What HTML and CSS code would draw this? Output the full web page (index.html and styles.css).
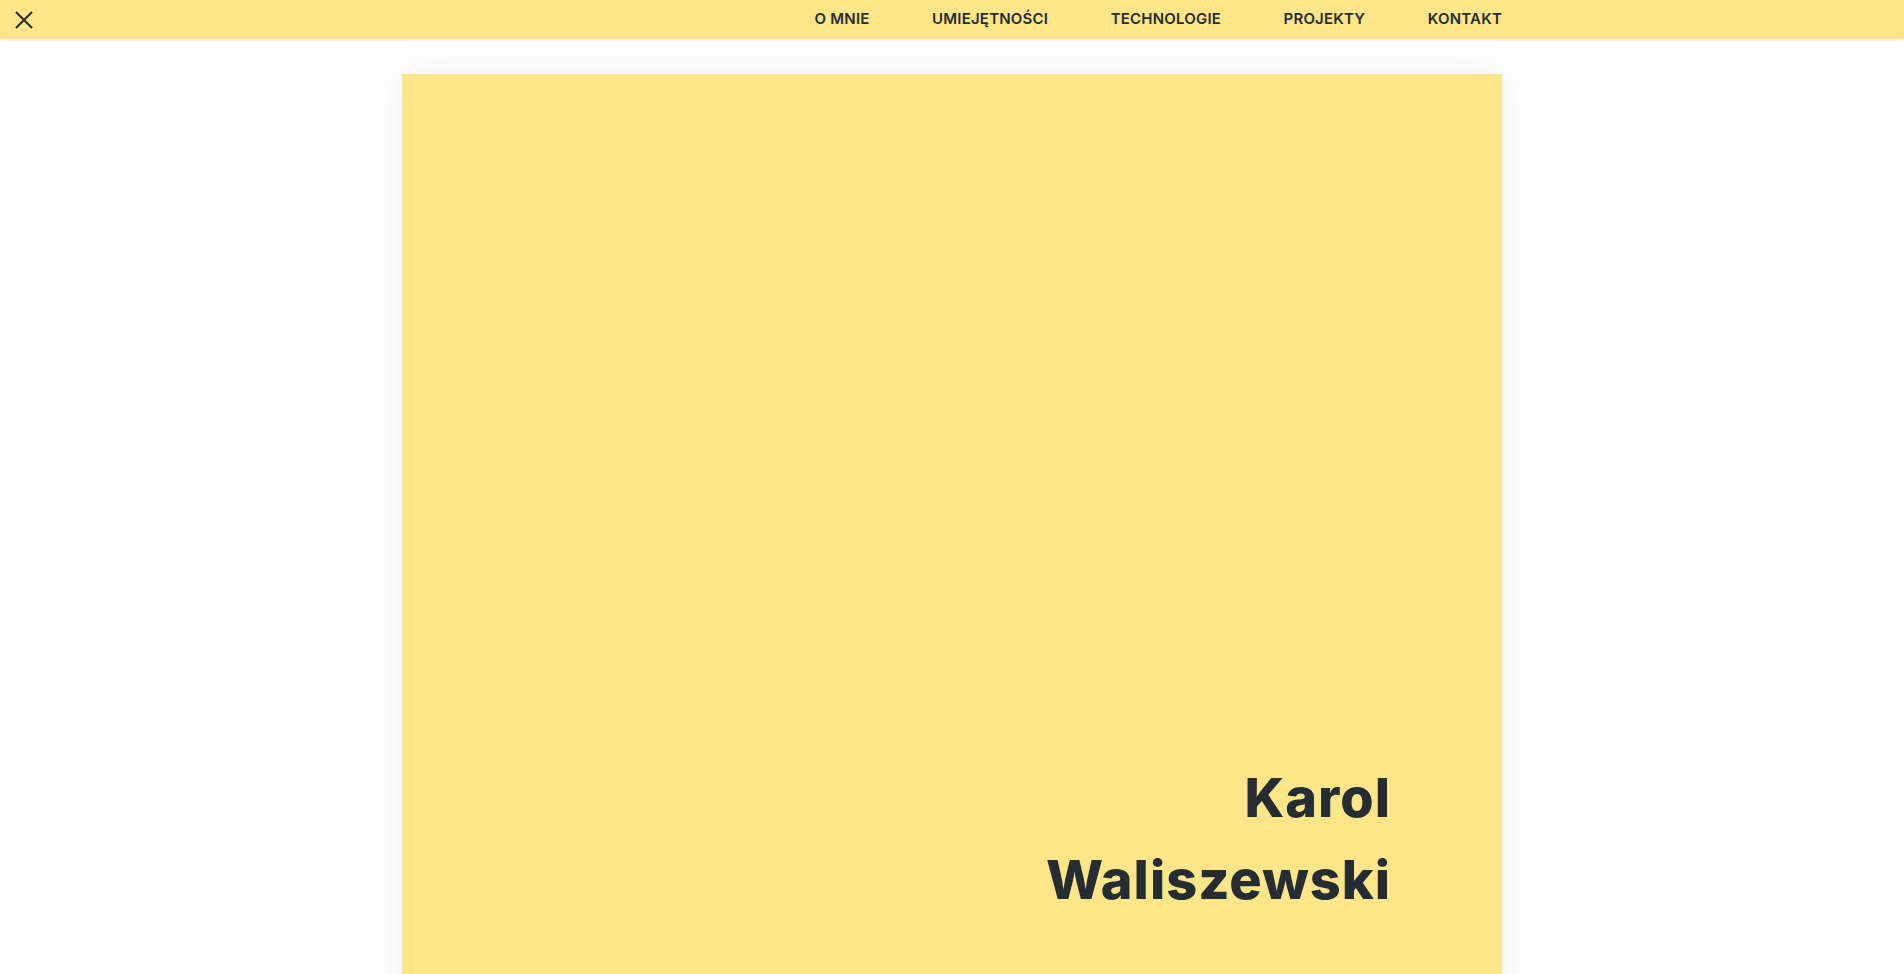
FILE: index.html
```html
<!DOCTYPE html>
<html lang="pl">
<head>
<meta charset="utf-8">
<title>Karol Waliszewski</title>
<link rel="stylesheet" href="styles.css">
</head>
<body>
<header class="topbar">
  <button class="menu-toggle" aria-label="Zamknij menu">
    <svg width="18" height="18" viewBox="0 0 18 18" aria-hidden="true">
      <path d="M1 1 L17 17 M17 1 L1 17" stroke="#252d33" stroke-width="2" fill="none"/>
    </svg>
  </button>
  <nav class="nav">
    <a class="nav-link" href="#o-mnie">O MNIE</a>
    <a class="nav-link" href="#umiejetnosci">UMIEJĘTNOŚCI</a>
    <a class="nav-link" href="#technologie">TECHNOLOGIE</a>
    <a class="nav-link" href="#projekty">PROJEKTY</a>
    <a class="nav-link" href="#kontakt">KONTAKT</a>
  </nav>
</header>
<main class="main">
  <section class="hero">
    <h1 class="hero-name">Karol<br>Waliszewski</h1>
  </section>
</main>
</body>
</html>
```

FILE: styles.css
```css
* { box-sizing: border-box; }
html, body { margin: 0; padding: 0; }
body {
  background: #ffffff;
  color: #252d33;
  font-family: "Inter", "Noto Sans", sans-serif;
  overflow: hidden;
}
.topbar {
  display: grid;
  grid-template-columns: 1fr 1100px 1fr;
  align-items: center;
  height: 39px;
  background: #fde68a;
  box-shadow: 0 1px 3px rgba(0, 0, 0, 0.12);
  position: relative;
  z-index: 2;
}
.menu-toggle {
  justify-self: start;
  margin-left: 15px;
  width: 18px;
  height: 18px;
  padding: 0;
  border: 0;
  background: none;
  display: flex;
  cursor: pointer;
}
.nav {
  display: flex;
  justify-content: flex-end;
  gap: 62.5px;
  padding-bottom: 2px;
}
.nav-link {
  font-family: "Inter", sans-serif;
  font-weight: 600;
  font-size: 15px;
  letter-spacing: 0.2px;
  color: #252d33;
  text-decoration: none;
  line-height: 1;
}
.main {
  padding-top: 35px;
}
.hero {
  width: 1100px;
  height: 1100px;
  margin: 0 auto;
  background: #fde68a;
  box-shadow: 0 0 40px rgba(0, 0, 0, 0.08);
  display: flex;
  justify-content: flex-end;
  padding: 683px 111px 0 0;
}
.hero-name {
  margin: 0;
  text-align: right;
  font-family: "Inter", sans-serif;
  font-weight: 800;
  font-size: 54px;
  line-height: 82px;
  letter-spacing: 1px;
  color: #252d33;
}
```
